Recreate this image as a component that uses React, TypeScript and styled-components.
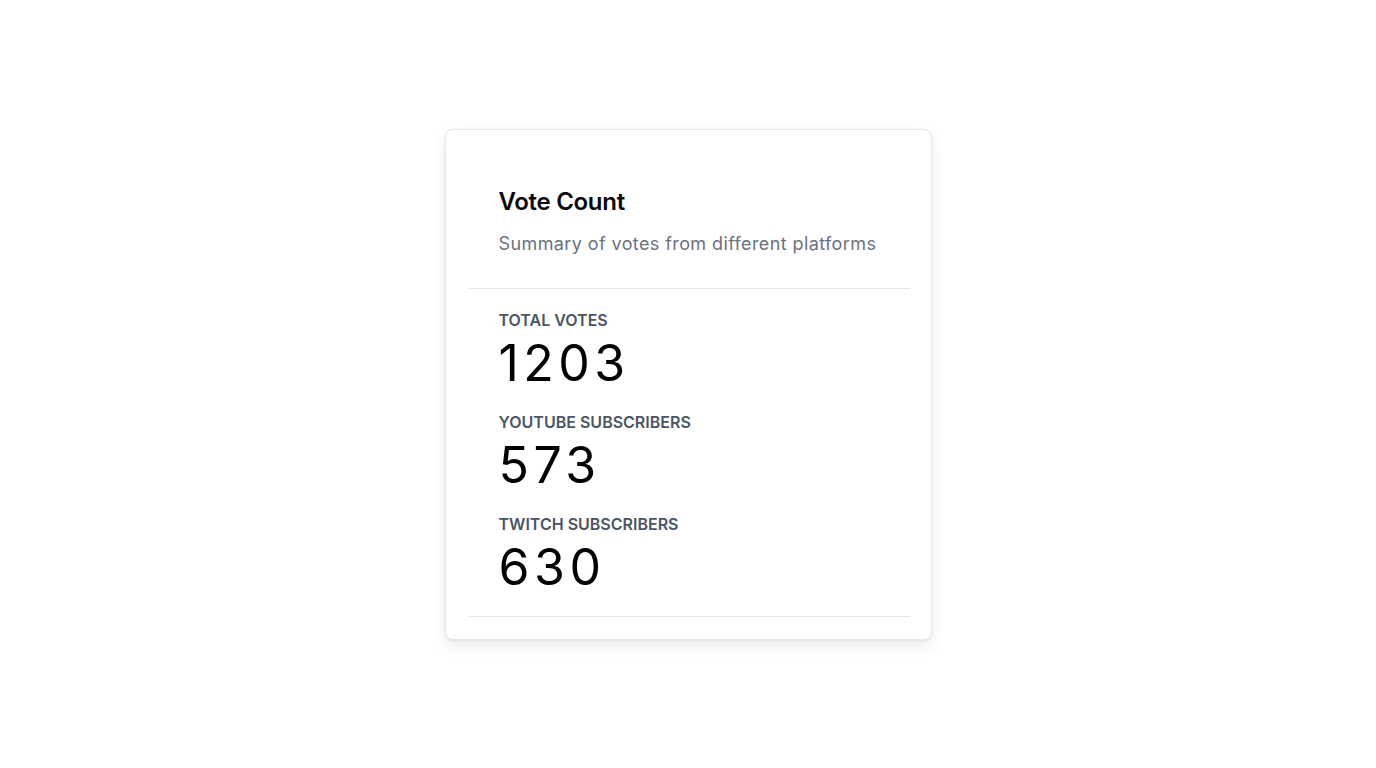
import React from "react";
import styled, { createGlobalStyle } from "styled-components";

const GlobalStyle = createGlobalStyle`
  * { box-sizing: border-box; }
  html, body { margin: 0; padding: 0; background: #ffffff; }
  body { font-family: Inter, "Noto Sans", "Liberation Sans", sans-serif; }
`;

const Page = styled.main`
  min-height: 768px;
  display: flex;
  align-items: center;
  justify-content: center;
`;

const Card = styled.section`
  width: 487px;
  height: 511px;
  background: #ffffff;
  border: 1px solid #e5e7eb;
  border-radius: 8px;
  box-shadow: 0 6px 14px rgba(0, 0, 0, 0.08), 0 1px 3px rgba(0, 0, 0, 0.06);
  padding: 0 21px;
  display: flex;
  flex-direction: column;
`;

const Header = styled.header`
  padding: 56px 32px 30px;
  border-bottom: 1px solid #e5e7eb;
`;

const Title = styled.h2`
  margin: 0;
  font-size: 24px;
  line-height: 32px;
  font-weight: 600;
  color: #0a0a0a;
  letter-spacing: -0.3px;
`;

const Subtitle = styled.p`
  margin: 12px 0 0;
  font-size: 18px;
  line-height: 28px;
  color: #6b7280;
  letter-spacing: 0.4px;
`;

const StatList = styled.div`
  padding: 19px 32px 25px;
  border-bottom: 1px solid #e5e7eb;
  display: flex;
  flex-direction: column;
  gap: 23px;
`;

const Stat = styled.div`
  display: flex;
  flex-direction: column;
  gap: 7px;
`;

const Label = styled.span`
  font-size: 16px;
  line-height: 24px;
  font-weight: 600;
  color: #4b5563;
  text-transform: uppercase;
`;

const Value = styled.span`
  font-size: 50px;
  line-height: 48px;
  font-weight: 400;
  color: #000000;
  letter-spacing: 0.09em;
`;

const stats = [
  { label: "Total Votes", value: 1203 },
  { label: "YouTube Subscribers", value: 573 },
  { label: "Twitch Subscribers", value: 630 },
];

export default function App() {
  return (
    <>
      <GlobalStyle />
      <Page>
        <Card>
          <Header>
            <Title>Vote Count</Title>
            <Subtitle>Summary of votes from different platforms</Subtitle>
          </Header>
          <StatList>
            {stats.map((s) => (
              <Stat key={s.label}>
                <Label>{s.label}</Label>
                <Value>{s.value}</Value>
              </Stat>
            ))}
          </StatList>
        </Card>
      </Page>
    </>
  );
}
